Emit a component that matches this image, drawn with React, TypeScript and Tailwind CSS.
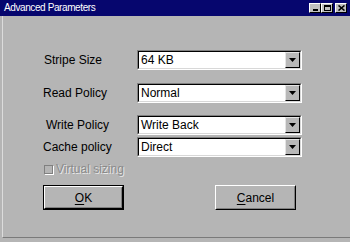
const fields = [
  { label: "Stripe Size", value: "64 KB", pl: "pl-[41px]", mt: "mt-0" },
  { label: "Read Policy", value: "Normal", pl: "pl-[40px]", mt: "mt-[13px]" },
  { label: "Write Policy", value: "Write Back", pl: "pl-[43px]", mt: "mt-[12px]" },
  { label: "Cache policy", value: "Direct", pl: "pl-[40px]", mt: "mt-[2px]" },
]

function Combo({ value }: { value: string }) {
  return (
    <div className="w-[165px] h-[20px] border border-t-[#808080] border-l-[#808080] border-b-white border-r-white">
      <div className="h-full flex border border-t-black border-l-black border-b-[#d8d8d8] border-r-[#d8d8d8] bg-white">
        <span className="flex-1 pl-[2px] text-[12px] leading-[16px] text-black">{value}</span>
        <div className="w-[15px] h-full bg-[#b8b8b8] border border-t-[#e4e4e4] border-l-[#e4e4e4] border-b-black border-r-black flex items-center justify-center">
          <svg width="7" height="4" viewBox="0 0 7 4">
            <path d="M0 0h7L3.5 4z" fill="#000" />
          </svg>
        </div>
      </div>
    </div>
  )
}

function Button({ label, isDefault }: { label: string; isDefault?: boolean }) {
  return (
    <div className={`w-[81px] h-[25px] ${isDefault ? "border border-black" : ""}`}>
      <div className="h-full border border-t-white border-l-white border-b-black border-r-black">
        <div className="h-full flex items-center justify-center border border-transparent border-b-[#808080] border-r-[#808080] text-[12px] text-black">
          <span className="underline underline-offset-2">{label[0]}</span>
          <span>{label.slice(1)}</span>
        </div>
      </div>
    </div>
  )
}

export default function App() {
  return (
    <div className="w-[350px] h-[242px] bg-[#b5b5b5] flex flex-col overflow-hidden font-['Liberation_Sans',Arial,sans-serif]">
      {/* Title Bar */}
      <div className="h-[16px] bg-[#06066e] flex items-center justify-between pl-[4px] pr-[3px]">
        <span className="text-white text-[10px] tracking-[-0.4px] leading-none">Advanced Parameters</span>
        <div className="flex items-center">
          <div className="w-[12px] h-[10px] bg-[#c0c0c0] border border-t-white border-l-white border-b-black border-r-black flex items-end justify-center pb-[1px]">
            <div className="w-[5px] h-[2px] bg-black" />
          </div>
          <div className="w-[12px] h-[10px] bg-[#c0c0c0] border border-t-white border-l-white border-b-black border-r-black flex items-center justify-center">
            <div className="w-[7px] h-[6px] border border-black border-t-2" />
          </div>
          <div className="ml-[2px] w-[12px] h-[10px] bg-[#c0c0c0] border border-t-white border-l-white border-b-black border-r-black flex items-center justify-center">
            <svg width="7" height="6" viewBox="0 0 7 6">
              <path d="M0.5 0.5L6.5 5.5M6.5 0.5L0.5 5.5" stroke="#000" strokeWidth="1.6" />
            </svg>
          </div>
        </div>
      </div>

      {/* Body */}
      <div className="flex-1 flex pl-[2px] pb-[4px]">
        <div className="flex-1 flex flex-col border-l border-b border-l-[#dcdcdc] border-b-[#7a7a7a] pt-[34px]">
          {fields.map((f) => (
            <div key={f.label} className={`flex items-center ${f.mt}`}>
              <span className={`${f.pl} w-[134px] text-[12px] text-black`}>{f.label}</span>
              <Combo value={f.value} />
            </div>
          ))}

          {/* Checkbox */}
          <div className="flex items-center pl-[41px] mt-[6px] h-[12px]">
            <div className="w-[9px] h-[9px] border border-[#808080] bg-[#b5b5b5] shadow-[1px_1px_0_#ffffff]" />
            <span className="ml-[3px] text-[12px] text-[#8a8a8a] [text-shadow:1px_1px_0_#e8e8e8]">Virtual sizing</span>
          </div>

          {/* Buttons */}
          <div className="flex pl-[40px] mt-[10px] gap-[91px]">
            <Button label="OK" isDefault />
            <Button label="Cancel" />
          </div>
        </div>
      </div>
    </div>
  )
}
